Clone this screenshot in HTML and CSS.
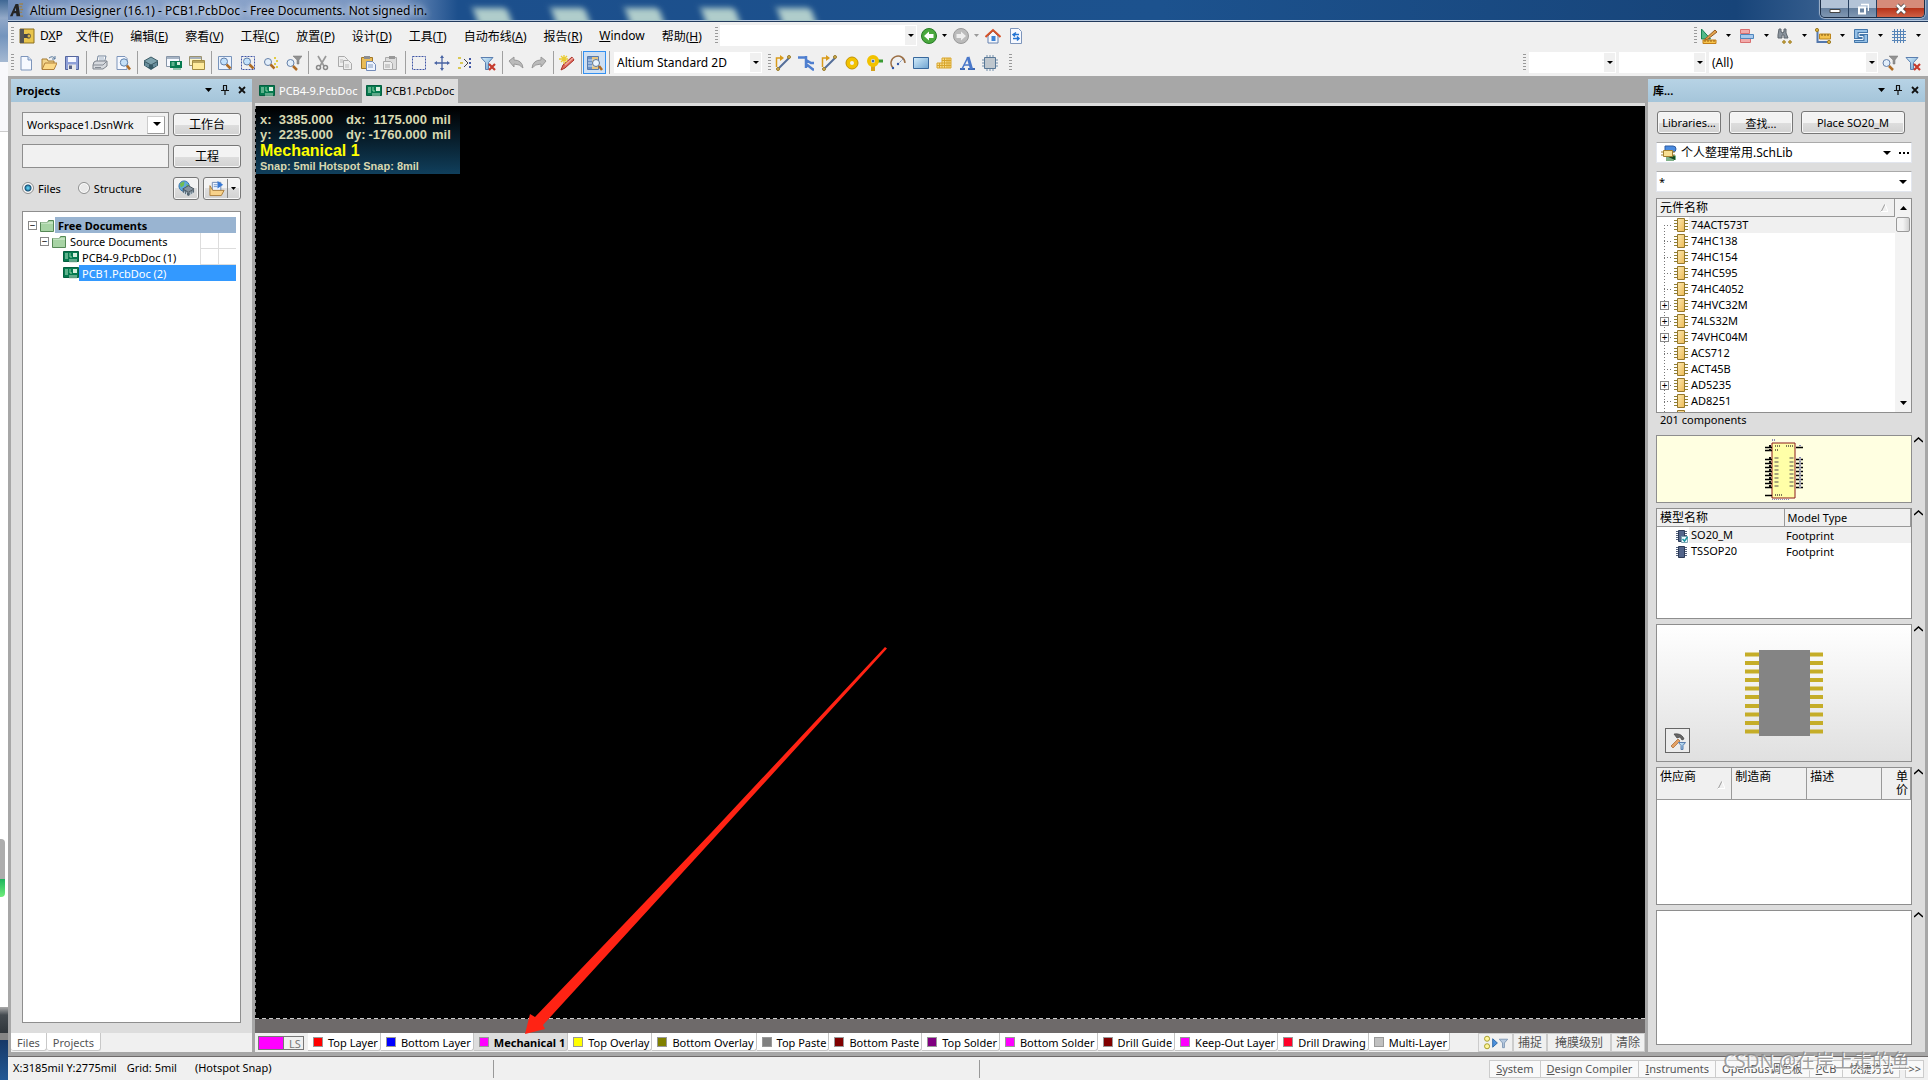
FILE: index.html
```html
<!DOCTYPE html>
<html lang="zh-CN">
<head>
    <meta charset="UTF-8">
    <meta name="viewport" content="width=device-width, initial-scale=1.0">
    <title>Altium Designer (16.1) - PCB1.PcbDoc</title>
    <link rel="stylesheet" href="styles.css">
</head>
<body>
    <!-- Icon set -->
    <svg class="defs" aria-hidden="true">
        <defs>
            <linearGradient id="gold" x1="0" y1="0" x2="1" y2="1"><stop offset="0" stop-color="#fbe7ae"/><stop offset="1" stop-color="#eebb55"/></linearGradient>
            <linearGradient id="blue" x1="0" y1="0" x2="1" y2="1"><stop offset="0" stop-color="#d5eefc"/><stop offset="1" stop-color="#6ea3d0"/></linearGradient>
        </defs>
        <symbol id="i-logo" viewBox="0 0 16 16"><path d="M1 14 7 1h3l2 13H8l-.4-3H5l-1.200 3zM6 8.500h1.600L7.300 5z" fill="#242424" fill-rule="evenodd"/><path d="M11 1h4M11 4h3M12 7h3M12 10h2M12 14h3" stroke="#9c8352" stroke-width="1.500"/></symbol>
        <symbol id="i-dxp" viewBox="0 0 16 16"><path d="M1 1h14v14H1z" fill="#e9c54d" stroke="#8b6f1e"/><path d="M1 1h4v14H1z" fill="#555"/><path d="M5 6h3a2.500 2.500 0 1 1 0 4H5z" fill="#474747"/><circle cx="10" cy="8" r="1.500" fill="#d6b54b"/></symbol>
        <symbol id="i-new" viewBox="0 0 16 16"><path d="M3 1.500h7l3.500 3.500v10H3z" fill="#f6f9ff" stroke="#7d95bb"/><path d="M10 1.500V5h3.500" fill="#cbdcf3" stroke="#7d95bb"/></symbol>
        <symbol id="i-open" viewBox="0 0 16 16"><path d="M1 14V4h5l1 2h6v3" fill="#f2d48c" stroke="#a57b30"/><path d="M1 14.500 4 8h12l-3 6.500z" fill="#fcd987" stroke="#b1803a"/><path d="M8 3q4-3 6 1m0-3v3h-3" fill="none" stroke="#59799d"/></symbol>
        <symbol id="i-save" viewBox="0 0 16 16"><path d="M1.500 1.500h13v13h-13z" fill="#8fa0d8" stroke="#55669e"/><path d="M4 2h8v5H4z" fill="#f6f8ff"/><path d="M4 9.500h8V15H4z" fill="#e8e8e8"/><path d="M5 10.500h3V14H5z" fill="#576287"/></symbol>
        <symbol id="i-print" viewBox="0 0 16 16"><path d="m5 7 1-6h8l-1.500 6z" fill="#fff" stroke="#75869d"/><path d="M7 3h5M7 5h5" stroke="#9badc3"/><path d="m2 7-1 3v4h10l4-3V6H4z" fill="#d6d9de" stroke="#7c828b"/><path d="M1 10h10l4-4M3 12.500h6" fill="none" stroke="#858b94"/></symbol>
        <symbol id="i-preview" viewBox="0 0 16 16"><path d="M2 1.500h8l2 2v11H2z" fill="#f6f9ff" stroke="#7d95bb"/><circle cx="9" cy="7.500" r="3.700" fill="#c5e1f8" stroke="#5e7fa9"/><path d="m12 10.500 3 4" stroke="#b06c24" stroke-width="2.500"/></symbol>
        <symbol id="i-cube" viewBox="0 0 16 16"><path d="m8 2 7 4-7 4-7-4z" fill="#7fa3ae" stroke="#3b5b66"/><path d="M1 6.500v4l7 4.500v-5zM15 6.500v4L8 15v-5z" fill="#365a66"/><path d="M3 8v3m2-2v3m6-3v3m2-4v3" stroke="#99bfd0"/></symbol>
        <symbol id="i-pcb" viewBox="0 0 16 16"><path d="M.500 2.500h15v10H.500z" fill="#067a4f" stroke="#055f40"/><path d="M2 5h3m-3 2h3m-3 2h3" stroke="#b7eacb"/><path d="M10 4h4v4h-4z" fill="#d6efdd"/><path d="M7 10v4m2-4v4m2-4v4m2-4v4" stroke="#b9d9c6"/><path d="M7 4v4h2" fill="none" stroke="#8ed5a9"/></symbol>
        <symbol id="i-pcbwin" viewBox="0 0 16 16"><path d="M.500 1.500h13v10H.500z" fill="#f6f9ff" stroke="#8695a7"/><path d="M1 2h12v2H1z" fill="#a7b4c4"/><path d="M4 6h12v7H4z" fill="#067a4f"/><path d="M5.500 8h3m-3 2h3" stroke="#b7eacb"/><path d="M11 7h3v3h-3z" fill="#d6efdd"/><path d="M8 13v2m2-2v2m2-2v2m2-2v2" stroke="#34976b"/></symbol>
        <symbol id="i-windows" viewBox="0 0 16 16"><path d="M.500 1.500h12v9H.500z" fill="#fff6c5" stroke="#9c9370"/><path d="M1 2h11v2H1z" fill="#a6b0bb"/><path d="M3.500 5.500h12v9h-12z" fill="#ffeb9b" stroke="#a48c40"/><path d="M4 6h11v2H4z" fill="#bba65e"/></symbol>
        <symbol id="i-zoomdoc" viewBox="0 0 16 16"><path d="M1.500 1.500h13v13h-13z" fill="#eaf2fd" stroke="#7894bb"/><circle cx="7" cy="6.500" r="3.500" fill="#c1e1fc" stroke="#637fa8"/><path d="m9.500 9.500 4 4" stroke="#b06c24" stroke-width="2.500"/></symbol>
        <symbol id="i-zoomarea" viewBox="0 0 16 16"><path d="M1.500 1.500h13v13h-13z" fill="none" stroke="#4056a6" stroke-dasharray="2 1"/><circle cx="7" cy="6.500" r="3.500" fill="#c1e1fc" stroke="#637fa8"/><path d="m9.500 9.500 4 4" stroke="#b06c24" stroke-width="2.500"/></symbol>
        <symbol id="i-zoomsel" viewBox="0 0 16 16"><circle cx="5" cy="7" r="3.500" fill="#e2eefa" stroke="#637fa8"/><path d="m7.500 9.500 4 4" stroke="#b06c24" stroke-width="2.500"/><path d="M11 3h2m0 3h2m-4 3h2m0 3h2" stroke="#e1cc46" stroke-width="2"/></symbol>
        <symbol id="i-zoomfilter" viewBox="0 0 16 16"><circle cx="4.500" cy="8" r="3.500" fill="#e2eefa" stroke="#637fa8"/><path d="m7 11 4 4" stroke="#b06c24" stroke-width="2.500"/><path d="M7 1h9l-3 4v4h-2V5z" fill="#929292" stroke="#777" stroke-width=".5"/></symbol>
        <symbol id="i-cut" viewBox="0 0 16 16"><path d="m4 1 6 10M12 1 6 11" stroke="#999" stroke-width="1.700"/><circle cx="4.500" cy="12.500" r="2" fill="none" stroke="#888" stroke-width="1.500"/><circle cx="11.500" cy="12.500" r="2" fill="none" stroke="#888" stroke-width="1.500"/></symbol>
        <symbol id="i-copy" viewBox="0 0 16 16"><path d="M1.500 1.500h6l3 3v7h-9z" fill="#eee" stroke="#aaa"/><path d="M6.500 5.500h5l3 3v6h-8z" fill="#eee" stroke="#aaa"/><path d="M3 5h3m-3 2h3m2 3h4m-4 2h4" stroke="#bbb"/></symbol>
        <symbol id="i-paste" viewBox="0 0 16 16"><path d="M1.500 2.500h11v11h-11z" fill="#e9bc58" stroke="#a27728"/><path d="M4 1h6v3H4z" fill="#8b8d91"/><path d="M6.500 6.500h6l3 3v6h-9z" fill="#eff5ff" stroke="#738bb8"/><path d="M8 10h5m-5 2h5" stroke="#839bc1"/></symbol>
        <symbol id="i-paste-off" viewBox="0 0 16 16"><path d="M2.500 2.500h11v12h-11z" fill="#ddd" stroke="#aaa"/><path d="M6 1h6v3H6z" fill="#999"/><path d="M.500 6.500h7l2 2v6h-9z" fill="#eee" stroke="#aaa"/><path d="M2 10h5m-5 2h5" stroke="#aaa"/></symbol>
        <symbol id="i-select" viewBox="0 0 16 16"><path d="M1.500 1.500h13v13h-13z" fill="none" stroke="#4056a6" stroke-dasharray="2 1"/></symbol>
        <symbol id="i-move" viewBox="0 0 16 16"><path d="M8 2v12M2 8h12" stroke="#4863a3" stroke-width="1.300"/><path d="m8 0 2 3H6zM8 16l2-3H6zM0 8l3-2v4zM16 8l-3-2v4z" fill="#4863a3"/></symbol>
        <symbol id="i-desel" viewBox="0 0 16 16"><path d="M1 3h3M3 8h3M1 13h3" stroke="#d9c957" stroke-width="2"/><path d="m7 4 4 4-4 4" fill="none" stroke="#444"/><path d="M12 3h2v2h-2zm0 4h2v2h-2zm0 4h2v2h-2z" fill="#4056a6"/></symbol>
        <symbol id="i-filterx" viewBox="0 0 16 16"><path d="M1 2.500h12l-4.500 5v7h-3v-7z" fill="url(#blue)" stroke="#5b7fb0"/><path d="m9 9 6 6m0-6-6 6" stroke="#c63a2c" stroke-width="2.200"/></symbol>
        <symbol id="i-undo" viewBox="0 0 16 16"><path d="m1 6 5-4v3q8 0 9 8-3-4-9-4v3z" fill="#bbb" stroke="#999"/></symbol>
        <symbol id="i-redo" viewBox="0 0 16 16"><path d="m15 6-5-4v3Q2 5 1 13q3-4 9-4v3z" fill="#bbb" stroke="#999"/></symbol>
        <symbol id="i-pen" viewBox="0 0 16 16"><path d="m2 15 2-5 9-8 2 3-9 8z" fill="#e0685c" stroke="#a73029"/><path d="m6 10 8-7" stroke="#f0aaa0" stroke-width="1.200"/><path d="M5 0v9M0 4h9M2 1l6 6m0-6L2 7" stroke="#eacb32" stroke-width="1.300"/></symbol>
        <symbol id="i-inspect" viewBox="0 0 16 16"><path d="M.500 1.500h11v13H.500z" fill="#e7c57f" stroke="#557aaf"/><path d="M1 2h4v12H1z" fill="#6c92c6"/><path d="M1 5h10M1 8h10M1 11h10" stroke="#d3e2f3"/><circle cx="9" cy="8" r="3.500" fill="#eaf4ff" stroke="#5d7491"/><path d="m12 11 3 4" stroke="#b06c24" stroke-width="2.500"/></symbol>
        <symbol id="i-route" viewBox="0 0 16 16"><path d="M1.500 12V3H6" fill="none" stroke="#d99b1a" stroke-width="1.500"/><path d="m5 0 4 3-4 3z" fill="#d99b1a"/><path d="M3 14 14 3" stroke="#546e99" stroke-width="2"/><circle cx="3" cy="14" r="1.500" fill="#d3b253" stroke="#997b2c"/><circle cx="14" cy="2" r="1.500" fill="#d3b253" stroke="#997b2c"/></symbol>
        <symbol id="i-diff" viewBox="0 0 16 16"><path d="M0 2.500h8M8 1v8l7 5.500h1M8 5l5 3h3M8 8v5" fill="none" stroke="#4f7fcf" stroke-width="2.500"/></symbol>
        <symbol id="i-pad" viewBox="0 0 16 16"><circle cx="8" cy="8" r="4" fill="none" stroke="#f2c200" stroke-width="4"/><circle cx="8" cy="8" r="6" fill="none" stroke="#c29200"/></symbol>
        <symbol id="i-via" viewBox="0 0 16 16"><path d="M8 6h8" stroke="#3a9b32" stroke-width="3"/><path d="M6 8v8" stroke="#d6a31c" stroke-width="4"/><circle cx="6" cy="6" r="4" fill="#fff" stroke="#f2c200" stroke-width="4"/><circle cx="6" cy="6" r="1.500" fill="#4770b0"/></symbol>
        <symbol id="i-arc" viewBox="0 0 16 16"><path d="M3 13A7 7 0 1 1 15 8" fill="none" stroke="#9c7046" stroke-width="1.500"/><path d="m8 9 5-5" stroke="#718cb8" stroke-dasharray="2 1"/><circle cx="3" cy="13" r="1.200" fill="#3155a6"/><circle cx="8" cy="9" r="1.200" fill="#3155a6"/></symbol>
        <symbol id="i-rect" viewBox="0 0 16 16"><path d="M.500 2.500h15v11H.500z" fill="url(#blue)" stroke="#38689d"/></symbol>
        <symbol id="i-poly" viewBox="0 0 16 16"><path d="M1 8h5V3h9v10H1z" fill="#f7dd8c" stroke="#d8a52c"/><path d="M1 10.500h14M6 5.500h9M6 8h9M3.500 8v5M6 8v5M8.500 3v10M11 3v10M13 3v10" stroke="#d8a52c"/></symbol>
        <symbol id="i-text" viewBox="0 0 16 16"><path d="M1 14h5M9 14h7" stroke="#3d69b5" stroke-width="2"/><path d="m3 14 6-12" fill="none" stroke="#4a78ca" stroke-width="1.500"/><path d="m9 2 3.500 12" stroke="#4a78ca" stroke-width="3"/><path d="M5 10h6" stroke="#4a78ca" stroke-width="1.500"/></symbol>
        <symbol id="i-chip" viewBox="0 0 16 16"><path d="M5 0v16M8 0v16M11 0v16M0 5h16M0 8h16M0 11h16" stroke="#708daa"/><path d="M2.500 2.500h11v11h-11z" fill="#bec6cd" stroke="#587796"/></symbol>
        <symbol id="i-back" viewBox="0 0 16 16"><circle cx="8" cy="8" r="7.500" fill="#4aa83d" stroke="#277c26"/><path d="m3 8 5-4.500V6h4.500v4H8v2.500z" fill="#fff"/></symbol>
        <symbol id="i-fwd" viewBox="0 0 16 16"><circle cx="8" cy="8" r="7.500" fill="#bbb" stroke="#999"/><path d="m13 8-5-4.500V6H3.500v4H8v2.500z" fill="#eee"/></symbol>
        <symbol id="i-home" viewBox="0 0 16 16"><path d="M3 8v7h10V8L8 3z" fill="#f4f7fc" stroke="#6782b0"/><path d="m.500 9 7.500-7 7.500 7" fill="none" stroke="#d55328" stroke-width="2"/><path d="M6.500 8h4v5h-4z" fill="#3c82d5"/></symbol>
        <symbol id="i-refresh" viewBox="0 0 16 16"><path d="M2.500.500h8l3 3v12h-11z" fill="#f6f9ff" stroke="#7d95bb"/><path d="M5 6.500h6m-3-2-3 2 2 2m4 2H5m4-2 2 2-2 2" fill="none" stroke="#2374d4" stroke-width="1.500"/></symbol>
        <symbol id="i-draft" viewBox="0 0 16 16"><path d="M.500 1v10h9z" fill="#52b989" stroke="#168253"/><path d="m4 11 10-9 2 2-9 7-3 1z" fill="#e3a34d" stroke="#955e24"/><path d="M2 12h13v3.500H2z" fill="#f7c44c" stroke="#c27f18"/><path d="M4 12v2m3-2v2m3-2v2m3-2v2" stroke="#9b6313"/></symbol>
        <symbol id="i-align" viewBox="0 0 16 16"><path d="M1.500 1.500h9v4h-9zM1.500 9.500h10v5h-10z" fill="#f2aaaa" stroke="#d87070"/><path d="M1.500 6.500h13v4h-13z" fill="#a6c9ed" stroke="#4f86bd"/></symbol>
        <symbol id="i-find" viewBox="0 0 16 16"><path d="M2 1h2v3h1v1h1V4h1V1h2v4l2 5H7V7H5v3H1V7z" fill="#8b949d" stroke="#5e666e"/><circle cx="7" cy="14" r="1.300" fill="#ddb646" stroke="#9d7c25"/><circle cx="13" cy="14" r="1.300" fill="#ddb646" stroke="#9d7c25"/></symbol>
        <symbol id="i-dim" viewBox="0 0 16 16"><path d="M2.500 3v11H14" fill="none" stroke="#5478ac" stroke-width="2"/><path d="M4.500 6h11v5h-11z" fill="#f4c14b" stroke="#bd861c"/><path d="M7 6v2m3-2v2m3-2v2" stroke="#805a17"/><circle cx="2" cy="2" r="1.600" fill="#ddb646" stroke="#9d7c25"/><circle cx="14" cy="14" r="1.600" fill="#ddb646" stroke="#9d7c25"/></symbol>
        <symbol id="i-room" viewBox="0 0 16 16"><path d="M1.500 1.500h13v13h-13z" fill="#95c0e6" stroke="#4376aa"/><path d="M15 5.500H6v3h4v3H1" fill="none" stroke="#4376aa" stroke-width="3"/><path d="M15 5.500H6v3h4v3H1" fill="none" stroke="#eef5fb"/></symbol>
        <symbol id="i-grid" viewBox="0 0 16 16"><path d="M1 3.500h14m-14 3h14m-14 3h14m-14 3h14M3.500 1v14m3-14v14m3-14v14m3-14v14" stroke="#5785b8"/></symbol>
        <symbol id="i-pin" viewBox="0 0 8 10"><path d="M2 .500h4M2.500.500v5M5.500.500v5M0 5.500h8M4 6v4" fill="none" stroke="#111" stroke-width="1.200"/></symbol>
        <symbol id="i-close" viewBox="0 0 8 8"><path d="m1 1 6 6m0-6L1 7" stroke="#111" stroke-width="1.800"/></symbol>
        <symbol id="i-down" viewBox="0 0 7 4"><path d="M0 0h7L3.500 4z" fill="currentColor"/></symbol>
        <symbol id="i-folder" viewBox="0 0 14 13"><path d="M.500 12.500v-9h7l1-2h5v11z" fill="#a7d3a4" stroke="#568856"/><path d="M1 4h12" stroke="#dcf0da"/></symbol>
        <symbol id="i-globe" viewBox="0 0 18 18"><circle cx="6.500" cy="6.500" r="5.500" fill="#5ea8dd" stroke="#3572a7"/><path d="M2 4q3-3 5-2L6 6 3 8zm7 0 3 2-3 3z" fill="#70bd52"/><path d="m11 6 6 3.500-6 3.500-6-3.500z" fill="#87949f" stroke="#47535c"/><path d="M5 10v3l6 4 6-4v-3l-6 3.500z" fill="#526471"/><path d="M7 12v3m2-2v3m4-3v3m2-4v3" stroke="#cedbe4"/></symbol>
        <symbol id="i-opendoc" viewBox="0 0 18 18"><path d="M3.500 2.500h9v10h-9z" fill="#eef5ff" stroke="#6f88b1"/><path d="M5 5h4M5 7h4" stroke="#7597c9"/><path d="m9 1 6 4-6 4z" fill="#3779d5"/><path d="M1 16.500V6l3 5h12l-3 5.500z" fill="#f8d28a" stroke="#aa7c38"/></symbol>
        <symbol id="i-lib" viewBox="0 0 16 16"><path d="M4 1h8q3 0 3 3t-3 3H4z" fill="#4a8be0" stroke="#2d5ca2"/><path d="M5 11h9v4M6 10v6m2-6v6m2-6v6m2-6v6" stroke="#297c37" stroke-width="1.200"/><path d="M2.500 5.500h9v6h-9z" fill="#f8df91" stroke="#a3802f"/><path d="M0 7h2m-2 3h2m10-3h2m-2 3h2" stroke="#a3802f"/></symbol>
        <symbol id="i-comp" viewBox="0 0 14 14"><path d="M0 2.500h14M0 5.500h14M0 8.500h14M0 11.500h14" stroke="#8e7f35"/><path d="M3.500.500h7v13h-7z" fill="url(#gold)" stroke="#96782b"/></symbol>
        <symbol id="i-foot" viewBox="0 0 14 14"><path d="M1 2.500h11M1 4.500h11M1 6.500h11M1 8.500h11M1 10.500h11" stroke="#53617c"/><path d="M3.500 1.500h6v11h-6z" fill="#52648a" stroke="#2c3b57"/></symbol>
        <symbol id="i-footok" viewBox="0 0 14 14"><path d="M1 2.500h11M1 4.500h11M1 6.500h11M1 8.500h11M1 10.500h11" stroke="#53617c"/><path d="M3.500 1.500h6v11h-6z" fill="#52648a" stroke="#2c3b57"/><path d="M6.500 7.500h6v6h-6z" fill="#eefaff" stroke="#7ba1af"/><path d="m7.500 10 2 2 3-4" fill="none" stroke="#1593a0" stroke-width="1.500"/></symbol>
        <symbol id="i-hammer" viewBox="0 0 18 18"><path d="m2 14 7-7 2 2-7 7z" fill="#e4a164" stroke="#a5642d" stroke-width=".7"/><path d="M5 2q6-1 9 3l1 2-2 1-2-3-3 1z" fill="#666" stroke="#444" stroke-width=".7"/><path d="M9.500 10.500h7l-2.500 3v4h-2v-4z" fill="url(#blue)" stroke="#5b7fb0"/></symbol>
        <symbol id="i-up" viewBox="0 0 9 6"><path d="m0 5 4.500-4L9 5" fill="none" stroke="#000" stroke-width="1.500"/></symbol>
        <symbol id="i-mask" viewBox="0 0 26 16"><circle cx="4" cy="4" r="2.700" fill="#fff69b" stroke="#a29925"/><circle cx="4" cy="12" r="2.700" fill="#fff69b" stroke="#a29925"/><path d="M10 4v9l5-4.500z" fill="#4c90dc" stroke="#2a67a8"/><path d="M17 4.500h9l-3.500 4v5h-2v-5z" fill="#b6c9df" stroke="#7f97b5"/></symbol>
        <symbol id="i-dots" viewBox="0 0 11 2"><path d="M0 0h2v2H0zM4 0h2v2H4zM8 0h2v2H8z" fill="#000"/></symbol>
    </svg>

    <div class="desktop-edge">
        <span class="edge-top"></span>
        <span class="edge-meter"></span>
        <span class="edge-dock"></span>
        <span class="edge-start"></span>
    </div>

    <div class="window">
        <header class="titlebar">
            <span class="blob"></span><span class="blob"></span><span class="blob"></span><span class="blob"></span><span class="blob"></span>
            <svg class="logo"><use href="#i-logo"/></svg>
            <span class="title">Altium Designer (16.1) - PCB1.PcbDoc - Free Documents. Not signed in.</span>
            <div class="win-buttons">
                <button class="min" aria-label="Minimize"><svg viewBox="0 0 12 12"><path d="M1 6.500h10v3H1z" fill="#fff" stroke="#444"/></svg></button>
                <button class="restore" aria-label="Restore"><svg viewBox="0 0 12 12"><path d="M4 1.500h7.500V8" fill="none" stroke="#fff" stroke-width="1.500"/><path d="M2 4.500h6v6H2z" fill="none" stroke="#fff" stroke-width="2"/></svg></button>
                <button class="close" aria-label="Close"><svg viewBox="0 0 12 12"><path d="m2 2 8 8m0-8-8 8" stroke="#444" stroke-width="4"/><path d="m2 2 8 8m0-8-8 8" stroke="#fff" stroke-width="2.500"/></svg></button>
            </div>
        </header>

        <div class="menubar">
            <span class="grip"></span>
            <svg class="icon dxp"><use href="#i-dxp"/></svg>
            <nav class="menu">
                <a href="#">D<u>X</u>P</a>
                <a href="#">文件(<u>F</u>)</a>
                <a href="#">编辑(<u>E</u>)</a>
                <a href="#">察看(<u>V</u>)</a>
                <a href="#">工程(<u>C</u>)</a>
                <a href="#">放置(<u>P</u>)</a>
                <a href="#">设计(<u>D</u>)</a>
                <a href="#">工具(<u>T</u>)</a>
                <a href="#">自动布线(<u>A</u>)</a>
                <a href="#">报告(<u>R</u>)</a>
                <a href="#"><u>W</u>indow</a>
                <a href="#">帮助(<u>H</u>)</a>
            </nav>
            <span class="grip"></span>
            <div class="combo flat address"><input type="text" aria-label="Address"></div>
            <div class="nav-tools">
                <button class="tool" aria-label="Back"><svg class="icon"><use href="#i-back"/></svg></button>
                <svg class="arrow"><use href="#i-down"/></svg>
                <button class="tool" aria-label="Forward"><svg class="icon"><use href="#i-fwd"/></svg></button>
                <svg class="arrow off"><use href="#i-down"/></svg>
                <button class="tool" aria-label="Home"><svg class="icon"><use href="#i-home"/></svg></button>
                <button class="tool" aria-label="Refresh"><svg class="icon"><use href="#i-refresh"/></svg></button>
            </div>
            <div class="util-tools">
                <span class="grip"></span>
                <button class="drop" aria-label="Drafting"><svg class="icon"><use href="#i-draft"/></svg><svg class="arrow"><use href="#i-down"/></svg></button>
                <button class="drop" aria-label="Align"><svg class="icon"><use href="#i-align"/></svg><svg class="arrow"><use href="#i-down"/></svg></button>
                <button class="drop" aria-label="Find"><svg class="icon"><use href="#i-find"/></svg><svg class="arrow"><use href="#i-down"/></svg></button>
                <button class="drop" aria-label="Dimension"><svg class="icon"><use href="#i-dim"/></svg><svg class="arrow"><use href="#i-down"/></svg></button>
                <button class="drop" aria-label="Room"><svg class="icon"><use href="#i-room"/></svg><svg class="arrow"><use href="#i-down"/></svg></button>
                <button class="drop" aria-label="Grid"><svg class="icon"><use href="#i-grid"/></svg><svg class="arrow"><use href="#i-down"/></svg></button>
            </div>
        </div>

        <div class="toolbar">
            <span class="grip"></span>
            <button class="tool" aria-label="New"><svg class="icon"><use href="#i-new"/></svg></button>
            <button class="tool" aria-label="Open"><svg class="icon"><use href="#i-open"/></svg></button>
            <button class="tool" aria-label="Save"><svg class="icon"><use href="#i-save"/></svg></button>
            <span class="sep"></span>
            <button class="tool" aria-label="Print"><svg class="icon"><use href="#i-print"/></svg></button>
            <button class="tool" aria-label="Preview"><svg class="icon"><use href="#i-preview"/></svg></button>
            <span class="sep"></span>
            <button class="tool" aria-label="Devices"><svg class="icon"><use href="#i-cube"/></svg></button>
            <button class="tool" aria-label="PCB view"><svg class="icon"><use href="#i-pcbwin"/></svg></button>
            <button class="tool" aria-label="Windows"><svg class="icon"><use href="#i-windows"/></svg></button>
            <span class="sep"></span>
            <button class="tool" aria-label="Fit document"><svg class="icon"><use href="#i-zoomdoc"/></svg></button>
            <button class="tool" aria-label="Zoom area"><svg class="icon"><use href="#i-zoomarea"/></svg></button>
            <button class="tool" aria-label="Zoom selected"><svg class="icon"><use href="#i-zoomsel"/></svg></button>
            <button class="tool" aria-label="Zoom filtered"><svg class="icon"><use href="#i-zoomfilter"/></svg></button>
            <span class="sep"></span>
            <button class="tool" aria-label="Cut"><svg class="icon"><use href="#i-cut"/></svg></button>
            <button class="tool" aria-label="Copy"><svg class="icon"><use href="#i-copy"/></svg></button>
            <button class="tool" aria-label="Paste"><svg class="icon"><use href="#i-paste"/></svg></button>
            <button class="tool" aria-label="Rubber stamp"><svg class="icon"><use href="#i-paste-off"/></svg></button>
            <span class="sep"></span>
            <button class="tool" aria-label="Select"><svg class="icon"><use href="#i-select"/></svg></button>
            <button class="tool" aria-label="Move"><svg class="icon"><use href="#i-move"/></svg></button>
            <button class="tool" aria-label="Deselect"><svg class="icon"><use href="#i-desel"/></svg></button>
            <button class="tool" aria-label="Clear filter"><svg class="icon"><use href="#i-filterx"/></svg></button>
            <span class="sep"></span>
            <button class="tool" aria-label="Undo"><svg class="icon"><use href="#i-undo"/></svg></button>
            <button class="tool" aria-label="Redo"><svg class="icon"><use href="#i-redo"/></svg></button>
            <span class="sep"></span>
            <button class="tool" aria-label="Cross probe"><svg class="icon"><use href="#i-pen"/></svg></button>
            <span class="sep"></span>
            <button class="tool active" aria-label="Browse"><svg class="icon"><use href="#i-inspect"/></svg></button>
            <span class="sep"></span>
            <div class="combo flat view-mode"><select aria-label="View configuration"><option>Altium Standard 2D</option></select></div>
            <span class="grip"></span>
            <button class="tool" aria-label="Route"><svg class="icon"><use href="#i-route"/></svg></button>
            <button class="tool" aria-label="Differential pair"><svg class="icon"><use href="#i-diff"/></svg></button>
            <button class="tool" aria-label="Multi route"><svg class="icon"><use href="#i-route"/></svg></button>
            <button class="tool" aria-label="Pad"><svg class="icon"><use href="#i-pad"/></svg></button>
            <button class="tool" aria-label="Via"><svg class="icon"><use href="#i-via"/></svg></button>
            <button class="tool" aria-label="Arc"><svg class="icon"><use href="#i-arc"/></svg></button>
            <button class="tool" aria-label="Fill"><svg class="icon"><use href="#i-rect"/></svg></button>
            <button class="tool" aria-label="Polygon"><svg class="icon"><use href="#i-poly"/></svg></button>
            <button class="tool" aria-label="String"><svg class="icon"><use href="#i-text"/></svg></button>
            <button class="tool" aria-label="Component"><svg class="icon"><use href="#i-chip"/></svg></button>
            <span class="grip"></span>
            <div class="filter-tools">
                <span class="grip"></span>
                <div class="combo flat filter-a"><select aria-label="Net"><option></option></select></div>
                <div class="combo flat filter-a"><select aria-label="Component filter"><option></option></select></div>
                <div class="combo flat filter-b"><select aria-label="Filter"><option>(All)</option></select></div>
                <button class="tool" aria-label="Apply filter"><svg class="icon"><use href="#i-zoomfilter"/></svg></button>
                <button class="tool" aria-label="Clear"><svg class="icon"><use href="#i-filterx"/></svg></button>
            </div>
        </div>

        <main class="workspace">
            <!-- Projects panel -->
            <aside class="panel">
                <div class="panel-header">
                    <h2>Projects</h2>
                    <svg class="arrow"><use href="#i-down"/></svg>
                    <svg class="pin"><use href="#i-pin"/></svg>
                    <svg class="x"><use href="#i-close"/></svg>
                </div>
                <div class="projects-body">
                    <div class="form-row">
                        <div class="combo boxed"><select aria-label="Workspace"><option>Workspace1.DsnWrk</option></select></div>
                        <button class="btn">工作台</button>
                    </div>
                    <div class="form-row">
                        <input class="project-name" type="text" aria-label="Project">
                        <button class="btn">工程</button>
                    </div>
                    <div class="form-row">
                        <div class="radios">
                            <label><input type="radio" name="mode" checked>Files</label>
                            <label><input type="radio" name="mode">Structure</label>
                        </div>
                        <div class="icon-buttons">
                            <button class="btn" aria-label="Vault"><svg><use href="#i-globe"/></svg></button>
                            <button class="btn split" aria-label="Open project"><svg><use href="#i-opendoc"/></svg><svg class="arrow"><use href="#i-down"/></svg></button>
                        </div>
                    </div>
                    <ul class="project-tree">
                        <li class="root"><span class="toggle">−</span><svg class="folder"><use href="#i-folder"/></svg><span class="name">Free Documents</span></li>
                        <li class="branch"><span class="toggle">−</span><svg class="folder"><use href="#i-folder"/></svg><span class="name">Source Documents</span><i></i><i></i></li>
                        <li class="leaf"><svg class="icon"><use href="#i-pcb"/></svg><span class="name">PCB4-9.PcbDoc (1)</span><i></i><i></i></li>
                        <li class="leaf selected"><svg class="icon"><use href="#i-pcb"/></svg><span class="name">PCB1.PcbDoc (2)</span></li>
                    </ul>
                </div>
                <div class="panel-tabs"><button>Files</button><button>Projects</button></div>
            </aside>

            <!-- PCB editor -->
            <section class="editor">
                <div class="doc-tabs">
                    <button><svg class="icon"><use href="#i-pcb"/></svg>PCB4-9.PcbDoc</button>
                    <button class="active"><svg class="icon"><use href="#i-pcb"/></svg>PCB1.PcbDoc</button>
                </div>
                <div class="canvas">
                    <div class="hud">
                        <div class="coords"><span>x:</span><b>3385.000</b><span>dx:</span><b>1175.000</b><span>mil</span></div>
                        <div class="coords"><span>y:</span><b>2235.000</b><span>dy:</span><b>-1760.000</b><span>mil</span></div>
                        <p class="hud-layer">Mechanical 1</p>
                        <p class="hud-snap">Snap: 5mil Hotspot Snap: 8mil</p>
                    </div>
                </div>
                <div class="canvas-foot"></div>
                <div class="layer-bar">
                    <button class="layer-set"><span></span>LS</button>
                    <div class="layers">
                        <button><i class="red"></i>Top Layer</button>
                        <button><i class="blue"></i>Bottom Layer</button>
                        <button class="active"><i class="magenta"></i>Mechanical 1</button>
                        <button><i class="yellow"></i>Top Overlay</button>
                        <button><i class="olive"></i>Bottom Overlay</button>
                        <button><i class="gray"></i>Top Paste</button>
                        <button><i class="maroon"></i>Bottom Paste</button>
                        <button><i class="purple"></i>Top Solder</button>
                        <button><i class="magenta"></i>Bottom Solder</button>
                        <button><i class="maroon"></i>Drill Guide</button>
                        <button><i class="magenta"></i>Keep-Out Layer</button>
                        <button><i class="crimson"></i>Drill Drawing</button>
                        <button><i class="silver"></i>Multi-Layer</button>
                    </div>
                    <div class="mask-tools">
                        <button aria-label="Mask"><svg><use href="#i-mask"/></svg></button>
                        <button>捕捉</button>
                        <button>掩膜级别</button>
                        <button>清除</button>
                    </div>
                </div>
                <svg class="pointer" viewBox="0 0 362 388"><path d="M360 0 362 1.500 190 190 18 378 20 382 0 387 5 367 10 370 186 186z" fill="#ff2314"/></svg>
            </section>

            <!-- Libraries panel -->
            <aside class="panel">
                <div class="panel-header">
                    <h2>库...</h2>
                    <svg class="arrow"><use href="#i-down"/></svg>
                    <svg class="pin"><use href="#i-pin"/></svg>
                    <svg class="x"><use href="#i-close"/></svg>
                </div>
                <div class="lib-body">
                    <div class="lib-buttons">
                        <button class="btn">Libraries...</button>
                        <button class="btn">查找...</button>
                        <button class="btn wide">Place SO20_M</button>
                    </div>
                    <div class="combo lib-select">
                        <svg class="icon"><use href="#i-lib"/></svg>
                        <select aria-label="Library"><option>个人整理常用.SchLib</option></select>
                        <button class="more" aria-label="More"><svg><use href="#i-dots"/></svg></button>
                    </div>
                    <div class="combo lib-search"><input type="text" value="*" aria-label="Search"></div>

                    <div class="comp-box">
                        <div class="comp-main">
                            <div class="col-head">元件名称<svg class="sort" viewBox="0 0 8 8"><path d="M1 8 5 0" stroke="#999"/><path d="m5 0 3 7.500H1" fill="none" stroke="#fff"/></svg></div>
                            <ul class="comp-list">
                                <li class="selected"><svg><use href="#i-comp"/></svg>74ACT573T</li>
                                <li><svg><use href="#i-comp"/></svg>74HC138</li>
                                <li><svg><use href="#i-comp"/></svg>74HC154</li>
                                <li><svg><use href="#i-comp"/></svg>74HC595</li>
                                <li><svg><use href="#i-comp"/></svg>74HC4052</li>
                                <li><span class="toggle">+</span><svg><use href="#i-comp"/></svg>74HVC32M</li>
                                <li><span class="toggle">+</span><svg><use href="#i-comp"/></svg>74LS32M</li>
                                <li><span class="toggle">+</span><svg><use href="#i-comp"/></svg>74VHC04M</li>
                                <li><svg><use href="#i-comp"/></svg>ACS712</li>
                                <li><svg><use href="#i-comp"/></svg>ACT45B</li>
                                <li><span class="toggle">+</span><svg><use href="#i-comp"/></svg>AD5235</li>
                                <li><svg><use href="#i-comp"/></svg>AD8251</li>
                                <li><svg><use href="#i-comp"/></svg></li>
                            </ul>
                        </div>
                        <div class="scrollbar">
                            <svg class="arrow flip"><use href="#i-down"/></svg>
                            <span class="thumb"></span>
                            <svg class="arrow"><use href="#i-down"/></svg>
                        </div>
                    </div>
                    <p class="comp-count">201 components</p>

                    <div class="section">
                        <div class="box symbol">
                            <svg viewBox="0 0 40 64">
                                <path d="M8 7h23v55H8z" fill="#ffffa8" stroke="#8b1a1a"/>
                                <path d="M1 11.500h7M1 14.500h7M1 23.500h7M1 27.500h7M1 31.500h7M1 35.500h7M1 39.500h7M1 43.500h7M1 47.500h7M1 51.500h7M1 59.500h7M32 11.500h7M32 23.500h7M32 27.500h7M32 31.500h7M32 35.500h7M32 39.500h7M32 43.500h7M32 47.500h7M32 51.500h7" stroke="#000" stroke-width="1.300"/>
                                <path d="M6 9v7M6 21v32" stroke="#111" stroke-width="2" stroke-dasharray="2 2"/>
                                <path d="M11 10h5M11 14h4M22 10h7M11 59h8" stroke="#7c7757" stroke-width="2" stroke-dasharray="1 1"/>
                                <path d="M12.500 21v32M27.500 21v32" stroke="#a8a57c" stroke-width="4" stroke-dasharray="2 2"/>
                                <path d="M8 4h3M8 64h17M36 9v2M36 21v32" stroke="#8888bb" stroke-width="2" stroke-dasharray="1 1"/>
                            </svg>
                        </div>
                        <svg class="fold"><use href="#i-up"/></svg>
                    </div>

                    <div class="section">
                        <div class="box models">
                            <table>
                                <thead><tr><th>模型名称</th><th>Model Type</th></tr></thead>
                                <tbody>
                                    <tr class="selected"><td><svg><use href="#i-footok"/></svg>SO20_M</td><td>Footprint</td></tr>
                                    <tr><td><svg><use href="#i-foot"/></svg>TSSOP20</td><td>Footprint</td></tr>
                                </tbody>
                            </table>
                        </div>
                        <svg class="fold"><use href="#i-up"/></svg>
                    </div>

                    <div class="section">
                        <div class="box footprint">
                            <svg class="package" viewBox="0 0 80 88">
                                <path d="M1 5.500h78M1 14h78M1 22.500h78M1 31h78M1 39.500h78M1 48h78M1 57h78M1 65.500h78M1 74h78M1 82.500h78" stroke="#c5ad28" stroke-width="4"/>
                                <path d="M15 1h51v86H15z" fill="#848484"/>
                            </svg>
                            <button class="view-btn" aria-label="View options"><svg><use href="#i-hammer"/></svg></button>
                        </div>
                        <svg class="fold"><use href="#i-up"/></svg>
                    </div>

                    <div class="section">
                        <div class="box suppliers">
                            <table>
                                <thead><tr><th>供应商<svg class="sort" viewBox="0 0 8 8"><path d="M1 8 5 0" stroke="#999"/><path d="m5 0 3 7.500H1" fill="none" stroke="#fff"/></svg></th><th>制造商</th><th>描述</th><th>单价</th></tr></thead>
                            </table>
                        </div>
                        <svg class="fold"><use href="#i-up"/></svg>
                    </div>

                    <div class="section last">
                        <div class="box"></div>
                        <svg class="fold"><use href="#i-up"/></svg>
                    </div>
                </div>
            </aside>
        </main>

        <footer class="statusbar">
            <div class="status-coords"><span>X:3185mil Y:2775mil</span><span>Grid: 5mil</span><span>(Hotspot Snap)</span></div>
            <div class="status-cell"></div>
            <div class="status-buttons">
                <button><u>S</u>ystem</button>
                <button><u>D</u>esign Compiler</button>
                <button><u>I</u>nstruments</button>
                <button>OpenBus调色板</button>
                <button><u>P</u>CB</button>
                <button>快捷方式</button>
                <button class="expand">&gt;&gt;</button>
            </div>
        </footer>
        <div class="watermark">CSDN @在岸上走的鱼</div>
    </div>
</body>
</html>
```
FILE: styles.css
```css
* {
    margin: 0;
    padding: 0;
    box-sizing: border-box;
}

body {
    display: flex;
    height: 100vh;
    overflow: hidden;
    font-family: "Noto Sans", "Noto Sans CJK SC", sans-serif;
    font-size: 11px;
    color: #000;
    background: #fff;
}

button, input, select {
    font: inherit;
    color: inherit;
}

button {
    background: none;
    border: none;
    white-space: nowrap;
}

ul {
    list-style: none;
}

svg {
    display: block;
    flex: none;
}

.defs {
    position: absolute;
    width: 0;
    height: 0;
}

.icon {
    width: 16px;
    height: 16px;
}

.arrow {
    width: 7px;
    height: 4px;
}

.arrow.off {
    color: #999;
}

.grip {
    flex: none;
    width: 3px;
    height: 17px;
    background: repeating-linear-gradient(#999 0 1px, #f1f1f1 1px 3px);
}

/* Desktop showing behind the window */
.desktop-edge {
    width: 8px;
    display: flex;
    flex-direction: column;
    background: #fff;
}

.edge-top {
    height: 132px;
    background: linear-gradient(#3f6794, #92a9c8 18px, #7394bd 36px, #a5b9d2 62px, #f8f8fb 62px, #f8f8fb 131px, #ccc 131px);
}

.edge-meter {
    width: 5px;
    height: 58px;
    margin-top: 707px;
    border-radius: 0 4px 4px 0;
    background: linear-gradient(#adadad 40px, #1cb45c 40px, #70ee7b);
}

.edge-dock {
    height: 26px;
    margin-top: auto;
    background: linear-gradient(#aaa, #454b50 8px, #30363b);
}

.edge-start {
    height: 47px;
    border-top: 7px solid #858585;
    background: linear-gradient(#173867, #235995);
}

.window {
    position: relative;
    flex: 1;
    min-width: 0;
    display: flex;
    flex-direction: column;
    background: #f0f0f0;
}

/* Title bar */
.titlebar {
    position: relative;
    overflow: hidden;
    height: 22px;
    display: flex;
    align-items: flex-start;
    gap: 6px;
    padding-left: 1px;
    border-bottom: 1px solid #223a5c;
    box-shadow: inset 0 -1px #b7c9df;
    background: linear-gradient(90deg, #6f8dba, #8da5cb 200px, #7492bf 390px, #1c4f8c 450px, #1c528e 60%, #174479 90%, #5c7ea8);
}

.logo {
    position: relative;
    width: 15px;
    height: 15px;
    margin-top: 3px;
}

.title {
    position: relative;
    flex: 1;
    font-size: 12px;
    line-height: 22px;
    text-shadow: 0 0 6px #fff, 0 0 8px #dce6f2;
}

.blob {
    position: absolute;
    left: 468px;
    top: 8px;
    width: 34px;
    height: 18px;
    transform: skewX(20deg);
    background: #b0cdcb;
    filter: blur(3px);
}

.blob:nth-child(2) { left: 546px; }
.blob:nth-child(3) { left: 620px; }
.blob:nth-child(4) { left: 696px; }
.blob:nth-child(5) { left: 772px; }

.win-buttons {
    position: relative;
    display: flex;
    height: 18px;
    margin-right: 3px;
    border: 1px solid #1d2f48;
    border-top: none;
    border-radius: 0 0 5px 5px;
    overflow: hidden;
    box-shadow: 0 0 1px 1px #a4b6cd;
}

.win-buttons button {
    width: 28px;
    display: flex;
    justify-content: center;
    align-items: center;
    border-right: 1px solid #27405f;
    background: linear-gradient(#b3c3d7 8px, #657f9e 8px, #8097b2);
}

.win-buttons svg {
    width: 12px;
    height: 12px;
}

.win-buttons .close {
    width: 47px;
    border: none;
    background: linear-gradient(#d68b7a 8px, #b63118 8px, #cf6146);
}

/* Menu and tool bars */
.menubar {
    height: 29px;
    display: flex;
    align-items: center;
    padding: 0 3px 2px;
    font-size: 12px;
}

.dxp {
    margin-left: 5px;
}

.menu {
    width: 680px;
    display: flex;
    justify-content: space-between;
    padding: 0 13px 0 5px;
}

.menu a {
    color: #000;
    text-decoration: none;
    white-space: nowrap;
}

.menu a:first-child {
    margin-right: -4px;
}

.combo {
    position: relative;
    display: flex;
    align-items: center;
    background: #fff;
}

.combo::after {
    content: "";
    position: absolute;
    right: 4px;
    top: 50%;
    margin-top: -2px;
    border: 4px solid transparent;
    border-top-color: #000;
    border-bottom: none;
    pointer-events: none;
}

.combo select, .combo input {
    flex: 1;
    min-width: 0;
    width: 100%;
    height: 100%;
    padding: 0 2px;
    border: none;
    outline: none;
    appearance: none;
    background: transparent;
}

.combo.flat {
    height: 21px;
    font-size: 12px;
    background: linear-gradient(90deg, transparent calc(100% - 11px), #f0f0f0 0) #fff;
    border: 1px solid #fff;
}

.combo.flat::after {
    right: 2px;
    border-width: 3px;
    border-bottom: none;
}

.address {
    width: 197px;
    margin-left: 2px;
}

.tool {
    flex: none;
    width: 23px;
    height: 23px;
    display: flex;
    justify-content: center;
    align-items: center;
}

.tool.active {
    border: 1px solid #3390f0;
    background: #cfe0f3;
}

.nav-tools {
    display: flex;
    align-items: center;
}

.nav-tools .arrow {
    width: 5px;
    height: 3px;
    margin: 0 2px;
}

.util-tools {
    margin-left: auto;
    display: flex;
    align-items: center;
}

.drop {
    width: 38px;
    display: flex;
    align-items: center;
    justify-content: space-between;
    padding: 0 4px;
}

.drop .arrow {
    width: 5px;
    height: 3px;
}

.toolbar {
    height: 25px;
    display: flex;
    align-items: center;
    padding: 0 4px 2px 3px;
}

.sep {
    flex: none;
    width: 1px;
    height: 23px;
    margin: 0 1px 0 3px;
    background: #a0a0a0;
}

.view-mode {
    width: 148px;
    margin: 0 6px 0 3px;
}

.toolbar > .grip:nth-last-child(2) {
    margin-left: 8px;
}

.filter-tools {
    margin-left: auto;
    display: flex;
    align-items: center;
    gap: 3px;
}

.filter-tools .tool {
    margin-left: -3px;
}

.filter-a {
    width: 87px;
}

.filter-b {
    width: 169px;
}

/* Workspace */
.workspace {
    flex: 1;
    min-height: 0;
    display: flex;
    gap: 3px;
    padding: 3px 3px 4px;
    background: #a7a7a7;
}

.panel {
    width: 241px;
    display: flex;
    flex-direction: column;
    background: #ddd;
}

.editor + .panel {
    width: 277px;
}

.panel-header {
    height: 23px;
    display: flex;
    align-items: center;
    gap: 9px;
    padding: 0 6px 1px 5px;
    background: linear-gradient(#b7d3e5, #a5c5da);
}

.panel-header h2 {
    flex: 1;
    font-size: 11px;
    font-weight: bold;
}

.pin {
    width: 8px;
    height: 10px;
}

.x {
    width: 8px;
    height: 8px;
}

.btn {
    height: 23px;
    display: flex;
    justify-content: center;
    align-items: center;
    border: 1px solid #777;
    border-radius: 3px;
    background: linear-gradient(#f3f3f3 50%, #dedede 50%, #d2d2d2);
    box-shadow: inset 0 0 0 1px #f7f7f7;
}

.projects-body {
    flex: 1;
    min-height: 0;
    display: flex;
    flex-direction: column;
    gap: 8px;
    padding: 10px 11px;
}

.form-row {
    height: 24px;
    display: flex;
    align-items: center;
    justify-content: space-between;
}

.form-row > .btn {
    width: 68px;
    font-size: 12px;
}

.combo.boxed, .project-name {
    width: 147px;
    height: 24px;
    border: 1px solid #8e8e8e;
    background: #f1f1f1;
}

.combo.boxed select {
    padding-left: 4px;
}

.combo.boxed::after {
    right: 7px;
    z-index: 1;
}

.combo.boxed::before {
    content: "";
    position: absolute;
    right: 3px;
    top: 3px;
    width: 16px;
    height: 16px;
    border: 1px solid #ccc;
    border-right-color: #999;
    border-bottom-color: #999;
    background: #fff;
    pointer-events: none;
}

.radios {
    display: flex;
    gap: 17px;
}

.radios label {
    display: flex;
    align-items: center;
    gap: 4px;
}

.radios input {
    appearance: none;
    width: 12px;
    height: 12px;
    border: 1px solid #8e8f8f;
    border-radius: 50%;
    background: #e9e9e9;
    box-shadow: inset 0 0 0 1px #fff;
}

.radios input:checked {
    background: radial-gradient(circle, #55c4e8 1px, #145078 3px, #e9e9e9 4px);
}

.icon-buttons {
    display: flex;
    gap: 4px;
}

.icon-buttons .btn {
    width: 26px;
}

.icon-buttons svg:first-child {
    width: 17px;
    height: 17px;
}

.icon-buttons .split {
    width: 38px;
    gap: 5px;
    background: linear-gradient(90deg, transparent 23px, #888 23px, #888 24px, transparent 24px), linear-gradient(#f3f3f3 50%, #dedede 50%, #d2d2d2);
}

.split .arrow {
    width: 5px;
    height: 3px;
}

.project-tree {
    flex: 1;
    margin-top: 3px;
    padding: 5px 4px 0 5px;
    border: 1px solid #8e8e8e;
    background: #fff;
}

.project-tree li {
    height: 16px;
    display: flex;
    align-items: center;
}

.project-tree .name {
    flex: 1;
    height: 16px;
    padding-left: 3px;
    line-height: 17px;
    white-space: nowrap;
}

.project-tree i {
    width: 18px;
    height: 16px;
    border: solid #ddd;
    border-width: 0 0 1px 1px;
}

.toggle {
    flex: none;
    width: 9px;
    height: 9px;
    margin-right: 3px;
    border: 1px solid #888;
    background: #fff;
    font-size: 10px;
    line-height: 7px;
    text-align: center;
}

.folder {
    width: 14px;
    height: 13px;
    margin-right: 1px;
}

.root .name {
    font-weight: bold;
    background: #99b4d1;
}

.branch {
    padding-left: 12px;
}

.leaf {
    padding-left: 35px;
}

.selected .name {
    color: #fff;
    background: #3399ff;
}

.panel-tabs {
    height: 19px;
    display: flex;
    background: #f0f0f0;
}

.panel-tabs button {
    height: 18px;
    padding: 1px 6px 0;
    color: #555;
    background: #fff;
    border: solid #c8c8c8;
    border-width: 0 1px 1px 0;
    border-radius: 0 0 3px 3px;
}

/* Editor */
.editor {
    position: relative;
    flex: 1;
    min-width: 0;
    display: flex;
    flex-direction: column;
}

.doc-tabs {
    height: 27px;
    display: flex;
    border-bottom: 3px solid #ddd;
}

.doc-tabs button {
    display: flex;
    align-items: center;
    gap: 4px;
    padding: 0 4px 1px;
    color: #fff;
}

.doc-tabs .active {
    color: #000;
    background: #ddd;
}

.canvas {
    flex: 1;
    min-height: 0;
    padding: 2px 0 0 1px;
    background: repeating-linear-gradient(90deg, #ccc 0 4px, #000 4px 7px) bottom / 100% 1px no-repeat, repeating-linear-gradient(#888 0 3px, #000 3px 6px) left / 1px 100% no-repeat #000;
}

.hud {
    width: 204px;
    height: 66px;
    padding: 4px;
    font-family: "Liberation Sans", sans-serif;
    font-size: 13px;
    font-weight: bold;
    color: #d8d8b0;
    background: linear-gradient(#000, #103f5c);
}

.coords {
    display: grid;
    grid-template-columns: 16px 57px 32px 62px 1fr;
    line-height: 15px;
    white-space: nowrap;
}

.coords b {
    text-align: right;
}

.coords span:nth-child(3) {
    padding-left: 13px;
}

.coords span:last-child {
    padding-left: 5px;
}

.hud-layer {
    font-size: 16px;
    line-height: 17px;
    color: #ff0;
}

.hud-snap {
    font-size: 11px;
    line-height: 14px;
}

.canvas-foot {
    height: 14px;
    background: #6e6a6a;
}

.layer-bar {
    height: 19px;
    display: flex;
    background: #f0f0f0;
}

.layer-set {
    width: 46px;
    height: 14px;
    margin: 3px 4px 0 3px;
    display: flex;
    align-items: center;
    gap: 5px;
    border: 1px solid #777;
    color: #777;
}

.layer-set span {
    width: 25px;
    height: 12px;
    border-right: 1px solid #777;
    background: #f0f;
}

.layers {
    display: flex;
}

.layers button {
    height: 18px;
    display: flex;
    align-items: center;
    gap: 5px;
    padding: 1px 2px 0 5px;
    background: #fff;
    border: solid #c4c4c4;
    border-width: 0 1px 1px 0;
    border-radius: 0 0 3px 0;
}

.layers .active {
    font-weight: bold;
    background: #ddd;
}

.layers i {
    width: 10px;
    height: 10px;
    border: 1px solid #999;
}

.red { background: #f00; }
.blue { background: #00f; }
.magenta { background: #f0f; }
.yellow { background: #ff0; }
.olive { background: #808000; }
.gray { background: #808080; }
.maroon { background: #800000; }
.purple { background: #800080; }
.crimson { background: #ff0028; }
.silver { background: #c0c0c0; }

.mask-tools {
    margin-left: auto;
    display: flex;
}

.mask-tools button {
    padding: 0 4px;
    border: 1px solid #ccc;
    font-size: 12px;
    line-height: 16px;
    color: #555;
}

.mask-tools button:nth-child(3) {
    padding: 0 7px;
}

.mask-tools svg {
    width: 25px;
    height: 15px;
}

.pointer {
    position: absolute;
    left: 270px;
    bottom: 17px;
    width: 362px;
    height: 388px;
}

/* Libraries panel */
.lib-body {
    flex: 1;
    min-height: 0;
    display: flex;
    flex-direction: column;
    padding: 9px 0 7px 8px;
}

.lib-buttons {
    display: flex;
    gap: 8px;
    padding-left: 1px;
}

.lib-buttons .btn {
    width: 64px;
}

.lib-buttons .wide {
    width: 104px;
}

.lib-select, .lib-search {
    width: 256px;
    height: 21px;
    margin-top: 8px;
    border: 1px solid #e2e6ee;
    border-top-color: #aaa;
}

.lib-select {
    padding-left: 4px;
    font-size: 12px;
}

.lib-select select {
    padding-left: 4px;
}

.lib-select .more svg {
    width: 11px;
    height: 2px;
    margin-right: 1px;
}

.lib-select::after {
    right: 20px;
}

.comp-box {
    width: 256px;
    height: 215px;
    margin-top: 6px;
    display: flex;
    border: 1px solid #8e8e8e;
    background: #fff;
}

.comp-main {
    flex: 1;
    display: flex;
    flex-direction: column;
}

.col-head {
    flex: none;
    height: 18px;
    display: flex;
    align-items: center;
    justify-content: space-between;
    padding: 0 6px 0 3px;
    font-size: 12px;
    line-height: 16px;
    background: #f0f0f0;
    border: solid #999;
    border-width: 0 1px 1px 0;
}

.sort {
    width: 8px;
    height: 8px;
}

.comp-list {
    flex: 1;
    min-height: 0;
    overflow: hidden;
    background: repeating-linear-gradient(#777 0 1px, transparent 1px 3px) 7px 8px / 1px 100% no-repeat;
}

.comp-list li {
    position: relative;
    height: 16px;
    display: flex;
    align-items: center;
    gap: 3px;
    padding-left: 17px;
    line-height: 14px;
    padding-bottom: 1px;
    background: repeating-linear-gradient(90deg, #777 0 1px, transparent 1px 3px) 7px 8px / 9px 1px no-repeat;
}

.comp-list .selected {
    background: repeating-linear-gradient(90deg, #777 0 1px, transparent 1px 3px) 7px 8px / 9px 1px no-repeat, linear-gradient(90deg, transparent 32px, #f0f0f0 32px);
}

.comp-list svg {
    width: 14px;
    height: 14px;
}

.comp-list .toggle {
    position: absolute;
    left: 3px;
    top: 4px;
}

.scrollbar {
    width: 16px;
    display: flex;
    flex-direction: column;
    align-items: center;
    padding: 7px 0;
    background: #f3f3f3;
}

.flip {
    transform: rotate(180deg);
}

.scrollbar .thumb {
    width: 14px;
    height: 15px;
    margin: 7px 0 auto;
    border: 1px solid #999;
    border-radius: 2px;
    background: linear-gradient(90deg, #f3f3f3 50%, #d0d0d0);
}

.comp-count {
    height: 16px;
    margin-bottom: 6px;
    padding-left: 4px;
    line-height: 13px;
}

.section {
    display: flex;
    margin-bottom: 5px;
}

.box {
    width: 256px;
    border: 1px solid #8e8e8e;
    background: #fff;
}

.fold {
    width: 9px;
    height: 6px;
    margin: 2px 0 0 2px;
}

.symbol {
    height: 68px;
    display: flex;
    justify-content: center;
    background: #ffffe1;
}

.symbol svg {
    width: 40px;
    height: 64px;
}

.box table {
    width: 100%;
    border-collapse: collapse;
    table-layout: fixed;
}

.box th {
    font-weight: normal;
    text-align: left;
    vertical-align: top;
    padding-left: 3px;
    background: #f0f0f0;
    border: solid #999;
    border-width: 0 1px 1px 0;
}

.models {
    height: 111px;
}

.models th {
    height: 17px;
    line-height: 17px;
}

.models th:first-child {
    width: 127px;
    font-size: 12px;
}

.models td {
    height: 16px;
    padding-left: 2px;
    line-height: 15px;
}

.models td svg {
    display: inline-block;
    width: 14px;
    height: 14px;
    margin: 0 2px 0 16px;
    vertical-align: middle;
}

.models .selected {
    background: linear-gradient(90deg, transparent 32px, #f0f0f0 32px);
}

.footprint {
    position: relative;
    height: 138px;
    display: flex;
    justify-content: center;
    background: linear-gradient(#fff, #e0e0e0);
}

.package {
    width: 80px;
    height: 88px;
    margin-top: 24px;
}

.view-btn {
    position: absolute;
    left: 8px;
    bottom: 8px;
    width: 25px;
    height: 25px;
    display: flex;
    justify-content: center;
    align-items: center;
    border: 1px solid #666;
    background: #ececec;
}

.view-btn svg {
    width: 18px;
    height: 18px;
}

.suppliers {
    height: 138px;
}

.suppliers th {
    position: relative;
    height: 31px;
    font-size: 12px;
    line-height: 13px;
    padding-top: 2px;
}

.suppliers .sort {
    position: absolute;
    right: 6px;
    bottom: 10px;
}

.suppliers th:last-child {
    width: 29px;
    padding-left: 14px;
}

.section.last {
    flex: 1;
    min-height: 0;
    margin-bottom: 0;
}

/* Status bar */
.statusbar {
    height: 24px;
    display: flex;
    align-items: center;
    padding: 0 4px;
    border-top: 1px solid #6e6a6a;
    background: #f0f0f0;
}

.status-coords, .status-cell {
    height: 18px;
    line-height: 16px;
    border-right: 1px solid #999;
}

.status-coords {
    width: 482px;
    display: flex;
    gap: 10px;
    padding-left: 1px;
}

.status-coords span:last-child {
    margin-left: 8px;
}

.status-cell {
    width: 486px;
}

.status-buttons {
    margin-left: auto;
    display: flex;
}

.status-buttons button {
    height: 18px;
    padding: 0 6px;
    line-height: 15px;
    color: #555;
    background: #f9f9f9;
    border: 1px solid #ccc;
    border-left-width: 0;
}

.status-buttons button:first-child {
    border-left-width: 1px;
}

.status-buttons .expand {
    margin-left: 5px;
    padding: 0 2px;
    border-left-width: 1px;
}

.watermark {
    position: absolute;
    right: 18px;
    bottom: 6px;
    font-size: 19px;
    line-height: 26px;
    color: rgba(130, 130, 130, 0.75);
    text-shadow: 1px 1px #fff;
}
```
